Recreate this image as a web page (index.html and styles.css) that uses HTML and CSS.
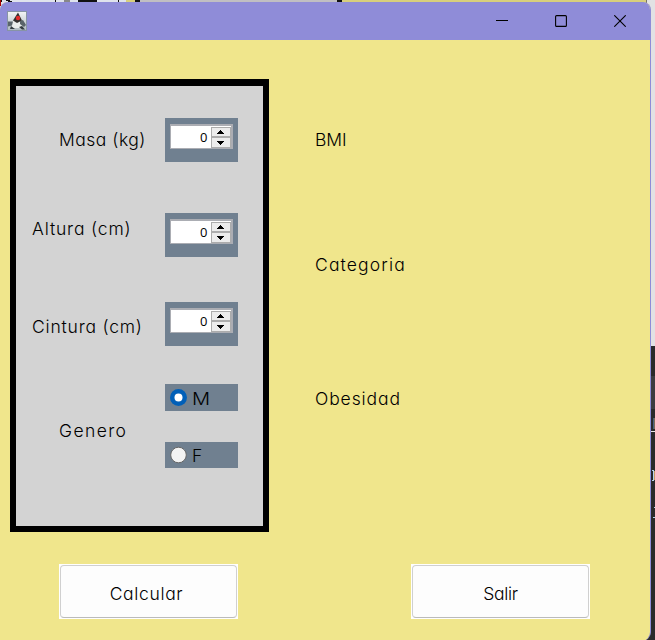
FILE: index.html
```html
<!DOCTYPE html>
<html lang="es">
<head>
<meta charset="utf-8">
<title>BMI</title>
<link rel="stylesheet" href="styles.css">
</head>
<body>
<svg class="desktop" width="655" height="640" shape-rendering="crispEdges" aria-hidden="true">
  <path fill="#d8cf7c" d="M0 0h655v6H0z"/>
  <path fill="#dfe3ec" d="M0 0h126v12H0z"/>
  <path fill="#a00" d="M0 0h1v6H0z"/>
  <path fill="#111" d="M1 0h1v2H1zM6 0h4v1H6zM8 1h4v1H8zM55 0h1v2h-1zM78 0h19v2H78zM118 0h1v2h-1zM135 0h5v2h-5zM337 0h5v2h-5z"/>
  <path fill="#888" d="M64 0h6v2h-6z"/>
  <path fill="#c0bfc2" d="M140 0h197v2H140z"/>
  <path fill="#d8cf7c" d="M126 0h9v2h-9z"/>
  <path fill="#e2e2e4" d="M647 0h8v346h-8z"/>
  <path fill="#76736a" d="M646 0h1v3h-1z"/>
  <path fill="#2a2a2b" d="M645 346h10v294h-10z"/>
  <path fill="#3c3c40" d="M651 376h4v33h-4z"/>
  <path fill="#7b6a58" d="M654 418h1v11h-1z"/>
  <path fill="#48607d" d="M653 418h1v11h-1z"/>
  <path fill="#e8e8e8" d="M651 431h4v1h-4z"/>
  <path fill="#b7d5ee" d="M652 470h2v1h-2zM653 471h1v9h-1zM652 480h2v1h-2zM654 507h1v1h-1zM653 517h2v1h-2z"/>
  <path fill="#c99c65" d="M654 471h1v9h-1z"/>
</svg>
<div class="window">
  <header class="titlebar">
    <svg class="app-icon" width="20" height="20" viewBox="0 0 20 20">
      <defs><linearGradient id="tile" x1="0" y1="0" x2="0" y2="1"><stop offset="0" stop-color="#f3f5f6"/><stop offset="1" stop-color="#aeb9bf"/></linearGradient></defs>
      <rect x=".5" y=".5" width="19" height="19" fill="url(#tile)" stroke="#8794a5"/>
      <path d="M10 5 5 11l-1 6h11l-1-7z" fill="#e9eceb"/>
      <path d="M11 1.500 6 9.500l4 2.500 5-2.500z" fill="#33302f"/>
      <path d="M1 10.500h5l-1 4-4 1zM13 10l3-1 3 5-2 2-4-3z" fill="#59646a"/>
      <path d="m4 15-1 3h5zM12 16l3 2.500h3L15 15z" fill="#333b40"/>
      <circle cx="11" cy="7" r="2.200" fill="#e32c2c"/>
    </svg>
    <div class="controls">
      <svg width="12" height="12"><path d="M0 5.500h12"/></svg>
      <svg width="12" height="12"><rect x=".6" y=".6" width="10.800" height="10.800" rx="1"/></svg>
      <svg width="12" height="12"><path d="m.3.300 11.400 11.400M11.700.300.300 11.700"/></svg>
    </div>
  </header>
  <main class="content">
    <div class="columns">
      <section class="panel">
        <div class="row masa"><span class="label">Masa (kg)</span>
          <div class="box"><div class="spinner"><span class="value">0</span><div class="steps"><i><svg width="7" height="4"><path d="M3 0h1v1h1v1h1v1h1v1H0V3h1V2h1V1h1z"/></svg></i><i><svg width="7" height="4"><path d="M0 0h7v1H6v1H5v1H4v1H3V3H2V2H1V1H0z"/></svg></i></div></div></div></div>
        <div class="row altura"><span class="label">Altura (cm)</span>
          <div class="box"><div class="spinner"><span class="value">0</span><div class="steps"><i><svg width="7" height="4"><path d="M3 0h1v1h1v1h1v1h1v1H0V3h1V2h1V1h1z"/></svg></i><i><svg width="7" height="4"><path d="M0 0h7v1H6v1H5v1H4v1H3V3H2V2H1V1H0z"/></svg></i></div></div></div></div>
        <div class="row cintura"><span class="label">Cintura (cm)</span>
          <div class="box"><div class="spinner"><span class="value">0</span><div class="steps"><i><svg width="7" height="4"><path d="M3 0h1v1h1v1h1v1h1v1H0V3h1V2h1V1h1z"/></svg></i><i><svg width="7" height="4"><path d="M0 0h7v1H6v1H5v1H4v1H3V3H2V2H1V1H0z"/></svg></i></div></div></div></div>
        <div class="row genero"><span class="label">Genero</span>
          <div class="options">
            <div class="option male"><svg width="18" height="18"><circle cx="8.500" cy="8.500" r="8.500" fill="#005fb8"/><circle cx="8.500" cy="8.500" r="4" fill="#fff"/></svg><span>M</span></div>
            <div class="option female"><svg width="18" height="18"><circle cx="8.500" cy="9" r="7.800" fill="#f3f3f3" stroke="#666"/></svg><span>F</span></div>
          </div></div>
      </section>
      <section class="results">
        <div class="bmi">BMI</div>
        <div class="categoria">Categoria</div>
        <div class="obesidad">Obesidad</div>
      </section>
    </div>
    <div class="actions">
      <button class="calcular"><span>Calcular</span></button>
      <button class="salir"><span>Salir</span></button>
    </div>
  </main>
</div>
</body>
</html>
```
FILE: styles.css
```css
* { box-sizing: border-box; }
body {
  margin: 0;
  padding-top: 2px;
  height: 640px;
  overflow: hidden;
  font: 300 17.5px/24px Inter, "Liberation Sans", sans-serif;
  font-feature-settings: "cv11";
  color: #000;
}
.desktop { position: absolute; left: 0; top: 0; }
.window {
  position: relative;
  width: 651px;
  height: 639px;
  overflow: hidden;
  border-right: 1px solid #8f8cd8;
  border-radius: 8px 8px 9px 0;
  background: #f0e68c;
}
.titlebar {
  display: flex;
  align-items: center;
  justify-content: space-between;
  height: 38px;
  padding: 0 24px 0 7px;
  background: #8f8cd8;
}
.app-icon { display: block; }
.controls { display: flex; gap: 47px; }
.controls svg { fill: none; stroke: #000; stroke-width: 1.1; }
.columns { display: flex; padding: 39px 0 0 10px; }
.panel {
  width: 259px;
  height: 453px;
  border: 6px solid #000;
  border-top-width: 7px;
  background: #d3d3d3;
}
.row { display: flex; justify-content: space-between; padding-right: 25px; }
.label { white-space: nowrap; }
.masa { margin-top: 32px; padding-left: 43px; }
.masa .label { margin-top: 10px; letter-spacing: .5px; }
.altura { margin-top: 51px; padding-left: 16px; }
.altura .label { margin-top: 4px; letter-spacing: .85px; }
.cintura { margin-top: 45px; padding-left: 16px; }
.cintura .label { margin-top: 13px; letter-spacing: .8px; }
.genero { margin-top: 38px; padding-left: 43px; }
.genero .label { margin-top: 35px; letter-spacing: 1.4px; }
.box { width: 73px; height: 44px; padding: 6px 5px; background: #708090; }
.spinner {
  display: flex;
  width: 63px;
  height: 25px;
  border: solid #abadb3;
  border-width: 2px 2px 1px 1px;
  background: #fff;
}
.value {
  width: 40px;
  padding-right: 3.5px;
  font: 13px/22px "Open Sans", sans-serif;
  text-align: right;
}
.steps { width: 20px; padding-top: 1px; background: #fff; }
.steps i {
  display: flex;
  justify-content: center;
  height: 10px;
  padding: 2px 1px 0 0;
  border: 1px solid #acacac;
  background: #ececec;
}
.steps i + i { height: 11px; padding-top: 3px; }
.steps svg { display: block; shape-rendering: crispEdges; }
.option {
  display: flex;
  align-items: center;
  gap: 4px;
  width: 73px;
  height: 26px;
  padding-left: 5px;
  background: #708090;
}
.option span { padding-top: 2px; }
.option.male { height: 27px; margin-bottom: 31px; }
.male span { transform: scaleX(1.15); transform-origin: left; }
.results { padding-left: 46px; }
.bmi { margin-top: 49px; letter-spacing: 0; }
.categoria { margin-top: 101px; letter-spacing: 1.15px; }
.obesidad { margin-top: 110px; letter-spacing: .9px; }
.actions { display: flex; gap: 173px; padding: 32px 0 0 59px; }
.actions button {
  width: 179px;
  height: 55px;
  padding: 1px;
  border: 0;
  background: #fff;
  font: inherit;
  font-feature-settings: inherit;
  color: inherit;
}
.actions span {
  display: flex;
  align-items: center;
  justify-content: center;
  height: 53px;
  padding: 5px 4px 0 0;
  border: 1px solid #d0d0d0;
  border-bottom-color: #bbb;
  border-radius: 4px;
  background: #fdfdfd;
}
.calcular { letter-spacing: .65px; }
.actions .salir { letter-spacing: -.3px; }
.salir span { padding-right: 0; }
```
